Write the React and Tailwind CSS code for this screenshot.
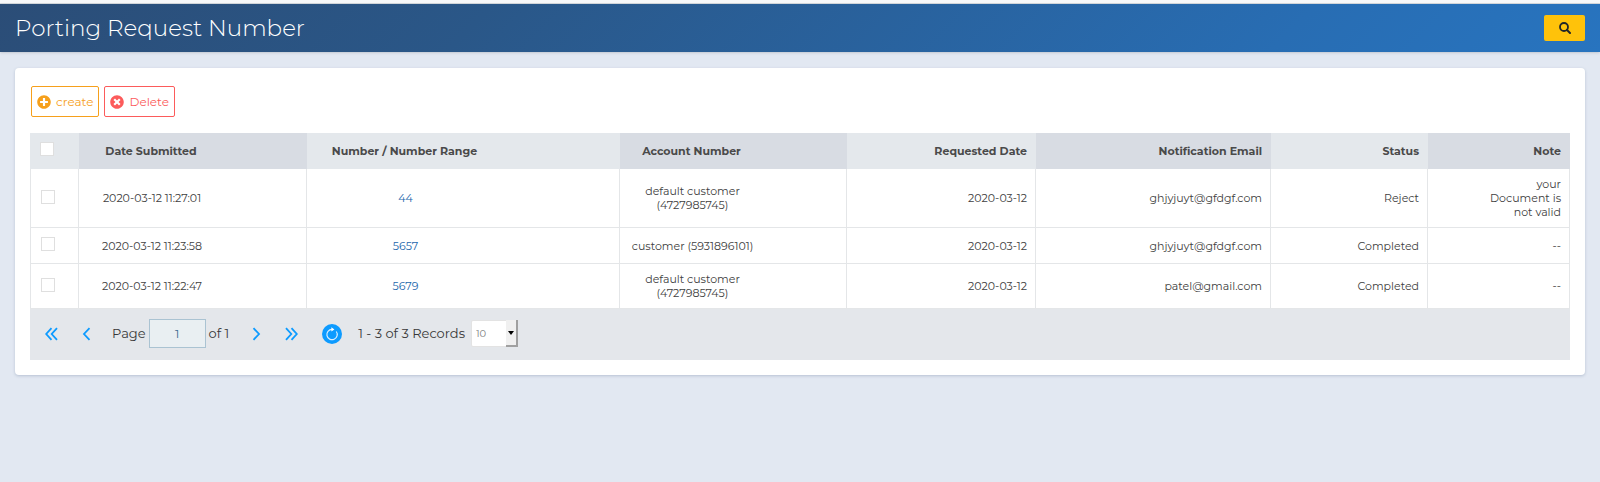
import { FaPlusCircle, FaTimesCircle } from "react-icons/fa";

const rows = [
  { date: "2020-03-12 11:27:01", number: "44", account: "default customer (4727985745)", requested: "2020-03-12", email: "ghjyjuyt@gfdgf.com", status: "Reject", note: "your Document is not valid", height: "h-[59px]" },
  { date: "2020-03-12 11:23:58", number: "5657", account: "customer (5931896101)", requested: "2020-03-12", email: "ghjyjuyt@gfdgf.com", status: "Completed", note: "--", height: "h-9" },
  { date: "2020-03-12 11:22:47", number: "5679", account: "default customer (4727985745)", requested: "2020-03-12", email: "patel@gmail.com", status: "Completed", note: "--", height: "h-[45px]" },
];

function Chevron({ double, flip }) {
  return (
    <svg width={double ? 13 : 9} height="14" viewBox={double ? "0 0 13 14" : "0 0 9 14"} fill="none" stroke="#0d9bff" strokeWidth="1.8" className={flip ? "rotate-180" : ""} aria-hidden="true">
      <path d={double ? "M6.5 1.2 1.2 7l5.3 5.8M12 1.2 6.7 7l5.3 5.8" : "M7.5 1.2 2 7l5.5 5.8"} />
    </svg>
  );
}

function Tick({ label }) {
  return (
    <input type="checkbox" aria-label={label} className="block size-[14px] appearance-none border border-[#dfdfdf] bg-white checked:bg-[#0d9bff]" />
  );
}

const light = "bg-[#e4e8ec]";
const dark = "bg-[#d8dce3]";
const cell = "border-r border-b border-[#e4e6e8] py-0";

export default function App() {
  return (
    <div className="min-h-screen bg-[#e2e8f2] font-['Montserrat','Inter',sans-serif] text-[#404040]">
      <div className="h-1 border-b border-[#d5d9dd] bg-[#f7f8f9]" />
      <header className="flex h-12 items-center justify-between bg-linear-[135deg,#2b4d77,#2a5788_30%,#286db3_80%,#2874bf] px-[15px] shadow-sm">
        <h1 className="text-[23px] font-light text-white">Porting Request Number</h1>
        <button type="button" aria-label="Search" className="flex h-[26px] w-[41px] items-center justify-center rounded-xs bg-[#ffc20a] text-[#212529]">
          <svg width="12" height="12" viewBox="0 0 12 12" fill="none" stroke="currentColor" strokeWidth="1.8" aria-hidden="true">
            <circle cx="5" cy="5" r="4" />
            <path d="m8 8 3 3" strokeLinecap="round" strokeWidth="2" />
          </svg>
        </button>
      </header>

      <main className="p-4 px-[15px]">
        <section className="rounded-sm bg-white px-[15px] pt-[18px] pb-[15px] shadow-[0_1px_3px_rgba(60,80,120,0.25)]">
          <div className="mb-4 flex gap-[5px] pl-px text-[12px]">
            <button type="button" className="flex h-[31px] items-center gap-[5px] rounded-xs border border-[#f6a01c] px-[5px] text-[#f6a01c]">
              <FaPlusCircle size={14} />
              create
            </button>
            <button type="button" className="flex h-[31px] items-center gap-[5px] rounded-xs border border-[#fc5b5b] px-[5px] text-[#fc5b5b]">
              <FaTimesCircle size={14} />
              Delete
            </button>
          </div>

          <table className="w-full table-fixed border-separate border-spacing-0 text-[11px] leading-[14px]">
            <colgroup>
              <col className="w-[49px]" />
              <col className="w-[228px]" />
              <col className="w-[313px]" />
              <col className="w-[227px]" />
              <col className="w-[189px]" />
              <col className="w-[235px]" />
              <col className="w-[157px]" />
              <col className="w-[142px]" />
            </colgroup>
            <thead>
              <tr className="h-9 font-bold text-[#4a4a4a]">
                <th className={`${light} pb-1 pl-2.5`}><Tick label="Select all requests" /></th>
                <th className={`${dark} pr-[84px]`}>Date Submitted</th>
                <th className={`${light} pr-[118px]`}>Number / Number Range</th>
                <th className={`${dark} pr-[84px]`}>Account Number</th>
                <th className={`${light} pr-[9px] text-right`}>Requested Date</th>
                <th className={`${dark} pr-[9px] text-right`}>Notification Email</th>
                <th className={`${light} pr-[9px] text-right`}>Status</th>
                <th className={`${dark} pr-[9px] text-right`}>Note</th>
              </tr>
            </thead>
            <tbody>
              {rows.map((r) => (
                <tr key={r.date} className={r.height}>
                  <td className={`${cell} border-l pb-[3px] pl-2.5`}><Tick label={`Select request of ${r.date}`} /></td>
                  <td className={`${cell} pr-[81px] text-center`}>{r.date}</td>
                  <td className={`${cell} pr-[115px] text-center`}><a href="#" className="text-[#1c66ac]">{r.number}</a></td>
                  <td className={`${cell} pr-[81px] text-center`}>
                    <span className="inline-block max-w-[132px]">{r.account}</span>
                  </td>
                  <td className={`${cell} pr-2 text-right`}>{r.requested}</td>
                  <td className={`${cell} pr-2 text-right`}>{r.email}</td>
                  <td className={`${cell} pr-2 text-right`}>{r.status}</td>
                  <td className={`${cell} pr-2 pl-[60px] text-right`}>{r.note}</td>
                </tr>
              ))}
            </tbody>
          </table>

          <nav aria-label="Pagination" className="flex h-[51px] items-center bg-[#e4e7eb] pb-0.5 pl-[15px] text-[13px] text-[#383838]">
            <button type="button" aria-label="First page"><Chevron double /></button>
            <button type="button" aria-label="Previous page" className="ml-6"><Chevron /></button>
            <label htmlFor="page" className="ml-[21px]">Page</label>
            <input id="page" type="text" defaultValue="1" className="ml-[3px] h-[29px] w-[57px] border border-[#aac3d2] bg-[#e9eff2] text-center text-[12px] text-[#3c6a90]" />
            <span className="ml-[3px]">of 1</span>
            <button type="button" aria-label="Next page" className="ml-[23px]"><Chevron flip /></button>
            <button type="button" aria-label="Last page" className="ml-6"><Chevron double flip /></button>
            <button type="button" aria-label="Refresh" className="ml-6 flex size-5 items-center justify-center rounded-full bg-[#0d9bff]">
              <svg width="14" height="14" viewBox="0 0 14 14" fill="none" stroke="#d9efff" strokeWidth="1.2" aria-hidden="true">
                <path d="M11.3 4.5A5.2 5.2 0 1 1 7 2.3" />
                <path d="M6.4 0.2 9.4 2.4 6.4 4.6z" fill="#fff" stroke="none" />
              </svg>
            </button>
            <span className="ml-4">1 - 3 of 3 Records</span>
            <span className="relative ml-1.5 flex">
              <select aria-label="Records per page" defaultValue="10" className="h-[27px] w-[47px] appearance-none rounded-xs border border-[#e3e3e3] bg-white pl-1 text-[10px] text-[#808080]">
                <option>10</option>
                <option>25</option>
                <option>50</option>
              </select>
              <span className="pointer-events-none absolute inset-y-0 right-0 flex w-3 items-center justify-center border-r-2 border-b-2 border-[#a0a0a0] bg-[#f0f0f0]">
                <svg width="6" height="4" viewBox="0 0 6 4" aria-hidden="true"><path d="M0 0h6L3 4z" /></svg>
              </span>
            </span>
          </nav>
        </section>
      </main>
    </div>
  );
}
